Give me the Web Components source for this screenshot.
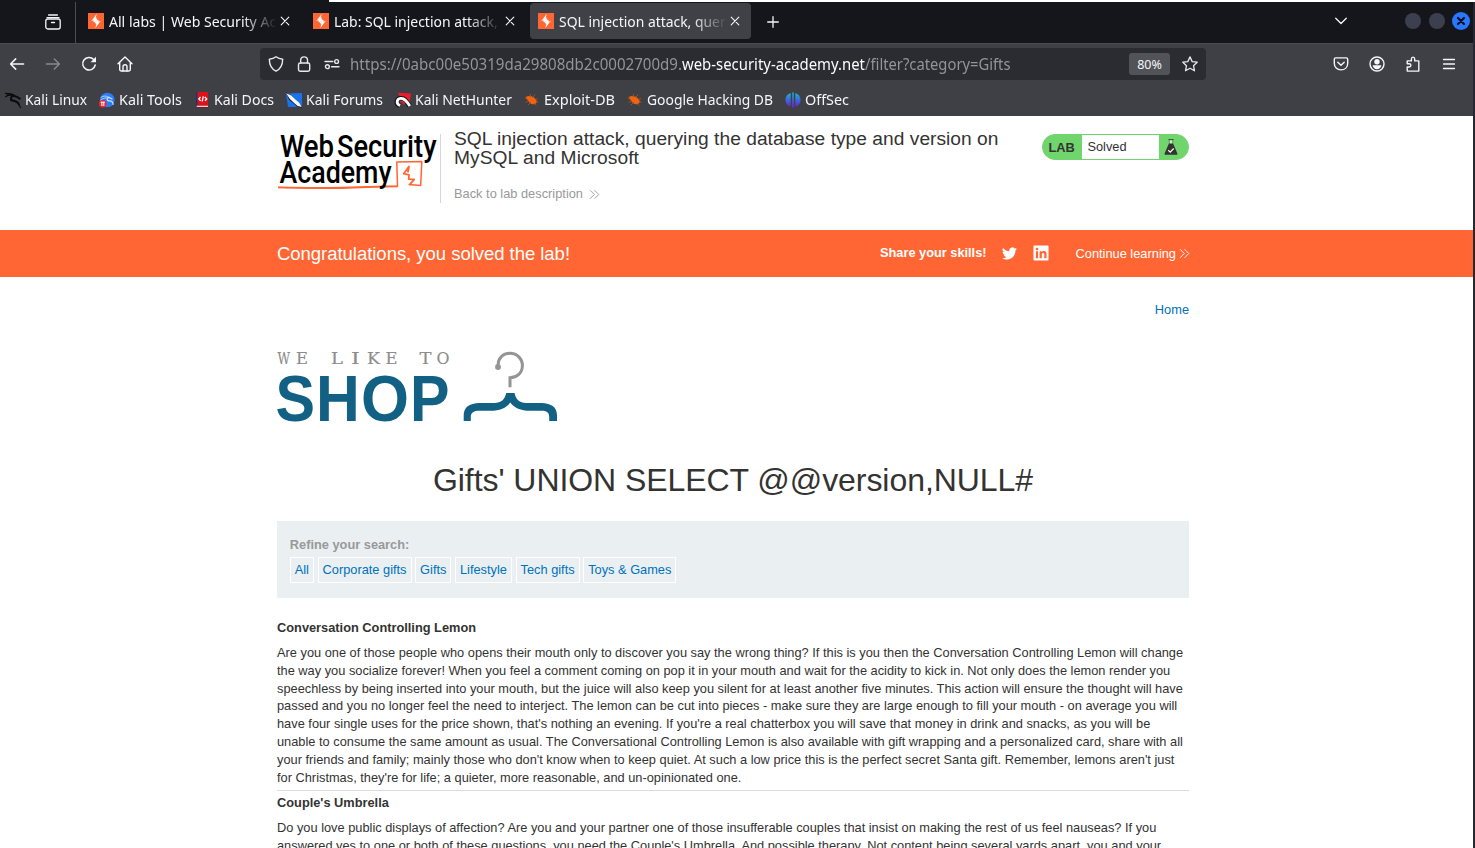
<!DOCTYPE html>
<html lang="en">
<head>
<meta charset="utf-8">
<title>SQL injection attack, querying the database type and version on MySQL and Microsoft</title>
<style>
html,body{margin:0;height:100%;overflow:hidden;background:#fff}
body{font-family:"Liberation Sans",Arial,sans-serif}
</style>
</head>
<body>
<desktop-window></desktop-window>
<script>
const define = (name, html, init) => customElements.define(name, class extends HTMLElement {
  constructor(){ super(); this.attachShadow({mode:'open'}); }
  connectedCallback(){
    this.shadowRoot.innerHTML = typeof html === 'function' ? html(this) : html;
    if (init) init(this);
  }
});

/* One-line text that occupies `w` pixels: by tracking, or with `condense` by glyph width. */
define('fit-text', `<style>:host{display:inline-block;white-space:pre;flex:none}span{display:inline-block;transform-origin:0 50%}</style><span><slot></slot></span>`, el => {
  const s = el.shadowRoot.querySelector('span'), w = +el.getAttribute('w');
  if (!w) return;
  el.style.width = w + 'px';
  const natural = s.getBoundingClientRect().width;
  if (el.hasAttribute('condense')) s.style.transform = `scaleX(${w / natural})`;
  else s.style.letterSpacing = (w - natural) / el.textContent.length + 'px';
});

const L = 'fill="none" stroke="currentColor" stroke-linecap="round" stroke-linejoin="round"';
const icons = {
  stack:[16,`<g ${L} stroke-width="1.3"><path d="M3.6 1h8.8M2 3.6h12"/><rect x=".8" y="5" width="14.4" height="10" rx="2"/><path d="M6.5 8.5h3"/></g>`],
  burp:[16,`<path fill="#ff6633" d="M0 0h16v16H0z"/><path fill="#fff" d="M8.7.8 3.5 8h4.1V5.3zM7.3 15.2 12.5 8H8.5v2.6zM7.6 4.6h1v6.7h-1zM3.5 7l5 1.8L7.5 10zM12.5 9 7.8 7.2l1-1z"/>`],
  x:[10,`<path ${L} stroke-width="1.1" d="m1.2 1.2 7.6 7.6m0-7.6L1.2 8.8"/>`],
  plus:[12,`<path ${L} stroke-width="1.3" d="M6 .7v10.6M.7 6h10.6"/>`],
  chev:[12,`<path ${L} stroke-width="1.3" d="m.7 3.2 5.3 5.3 5.3-5.3"/>`],
  back:[16,`<path ${L} stroke-width="1.5" d="M14.6 8H1.6M6.7 2.9 1.6 8l5.1 5.1"/>`],
  fwd:[16,`<path ${L} stroke-width="1.4" d="M1.4 8h13M9.3 2.9 14.4 8l-5.1 5.1"/>`],
  reload:[16,`<path ${L} stroke-width="1.5" d="M14.2 9A6.3 6.3 0 1 1 12.7 3.5"/><path fill="currentColor" d="M15 .8V6.2H9.6z"/>`],
  home:[16,`<g ${L} stroke-width="1.4"><path d="M1 7.8 8 1l7 6.8M2.7 6.4v7.2c0 .9.5 1.4 1.4 1.4h7.8c.9 0 1.4-.5 1.4-1.4V6.4"/><path d="M6 15v-4.2C6 9.4 6.8 8.7 8 8.7s2 .7 2 2.1V15"/></g>`],
  shield:[16,`<path ${L} stroke-width="1.4" d="M8 .8c2 1.6 4.3 2.3 6.7 2.5-.1 5.3-1.9 9.7-6.7 11.9C3.200 13 1.400 8.600 1.300 3.300 3.700 3.100 6 2.400 8 .8z"/>`],
  lock:[16,`<g ${L} stroke-width="1.4"><rect x="2.500" y="7" width="11.200" height="8.200" rx="1.700"/><path d="M4.700 7V4.300a3.400 3.400 0 0 1 6.800 0V7"/></g>`],
  perms:[16,`<g ${L} stroke-width="1.400"><path d="M1 5.500h7.800M7.500 10.700h7.500"/><circle cx="12.600" cy="5.500" r="1.900"/><circle cx="3.400" cy="10.700" r="1.900"/></g>`],
  star:[16,`<path ${L} stroke-width="1.300" d="m8 .9 2.200 4.700 5 .6-3.700 3.500 1 5.100L8 12.300l-4.500 2.500 1-5.100L.8 6.200l5-.6z"/>`],
  pocket:[16,`<g ${L} stroke-width="1.400"><path d="M1.300 3.300c0-.9.500-1.400 1.400-1.400h10.600c.9 0 1.400.5 1.400 1.400v3.900c0 4-2.800 6.700-6.700 6.700S1.300 11.200 1.300 7.200z"/><path d="M4.800 6.200 8 9.200l3.200-3"/></g>`],
  user:[16,`<circle cx="8" cy="8" r="7" ${L} stroke-width="1.400"/><circle cx="8" cy="5.700" r="2.700" fill="currentColor"/><path fill="currentColor" d="M3.600 9.300h8.800c-.3 2.400-2 3.900-4.400 3.900s-4.100-1.500-4.400-3.900z"/>`],
  ext:[16,`<path ${L} stroke-width="1.400" d="M2.200 15.100V11h2c2.300 0 2.300-3.300 0-3.300h-2V4.900h4.200V2.900c0-2.400 3.300-2.400 3.300 0v2h4.100v10.200z"/>`],
  menu:[14,`<path ${L} stroke-width="1.300" d="M1.500 2.500h11M1.500 7h11M1.500 11.500h11"/>`],
  kali:[16,`<g fill="none" stroke="#0b0b0d" stroke-linecap="round"><path stroke-width="1.200" d="M.4 1.300c4 .2 6.500.3 8.500 1.700M.6 4.800C3 3.200 6 2.900 9 3.700M1.800 3l5-.2"/><path stroke-width="2" d="M8.800 3.500C5.200 4.800 5 7.600 8 8.500c3 .8 5.200 1.400 6 4M9.200 4l2.800.9 2.800 1.800"/><path stroke-width="1.200" d="M12.200 10c1 2 2 3.300 3.300 5.500M7 9l-1.500-.5"/></g>`],
  tools:[16,`<circle cx="8.300" cy="8" r="7.300" fill="#2b7cf6"/><g fill="none" stroke="#cfe3ff" stroke-linecap="round" stroke-width=".8"><path d="M2 5.400c3-2 6.200-1.500 7.800-.2M1.500 8c2.500-2 5.400-2.500 8.700-2.100"/><path stroke-width="1.100" d="M9.300 5.700c-2.200 1-1.300 3.300 1 3.200 2.400-.1 3.700 1.200 3.800 3.600M10 5.200l3 1.800"/></g><circle cx="3.700" cy="11.800" r="3.800" fill="#ed2732"/><path stroke="#fff" d="M1.700 10.200h4.200M2.900 10v4M4.800 10v4"/>`],
  docs:[16,`<path fill="#16367c" d="M2 0h1.700v14.500H2z"/><path fill="#df1118" d="M3.500 0H14v13.700H3.500z"/><path fill="#d7d7df" d="M2.700 13.700H14v1.300H2.700z"/><path fill="#a50b13" d="M2.500 15H14v1H2.500z"/><path fill="none" stroke="#fff" stroke-width="1.300" d="M6.500 5 4.800 7l1.900 1.900M9.300 4.400 8.200 9.300M10.800 5l1.900 1.900-1.700 1.900"/>`],
  forums:[16,`<path fill="#1873ef" d="M0 1.500 16 1v12.500L9 15H2z"/><path fill="#17171c" d="M0 .5 5 3l8 9 3 4-5-1.500-8-7z"/><path fill="#f7f8ff" d="M.2 1.200 5.300 3.500l4.700 4.500 3 2.500 2.700 4.600-4-1.200-3.300-2.600-4.500-4.300z"/>`],
  nethunter:[16,`<path fill="#ed1c2b" d="M3 .8 16 1.500l-1.500 11L8 12z"/><path fill="none" stroke="#15151a" stroke-width="4.800" d="M4.500 13.500C.3 11.500 1.500 7 5.500 6.400s6 2.600 9 7.600"/><path fill="none" stroke="#fff" stroke-width="2.800" d="M5 13.500C.6 11.500 1.800 7 5.600 6.400s6.200 3 9.200 7.600"/><path fill="none" stroke="#dc1c2c" stroke-width="1.800" d="M5 9.700c2-.8 3.500.5 4.500 2.300"/>`],
  exploit:[16,`<path fill="#ee6412" d="M2 4.800C5 3.300 9.500 4.300 12 7.500c1.500 1.900.8 3.900-1.100 4.500-3.200.9-6-1.200-7-3.800L2 6.500z"/><path fill="none" stroke="#ad511c" stroke-width=".9" d="M3.200 5.700.6 6M4.500 9l-3 1.300M6.500 10.500l-2.700 2.700M6 4.800 6.500 2M9 5.500l2-3M11.500 7.500l2.500-1M12 10h2.500M10.300 11.500l2 2.200"/>`],
  offsec:[16,`<defs><linearGradient id="g" x2="0" y2="1"><stop stop-color="#22b0ce"/><stop offset=".5" stop-color="#386bdc"/><stop offset="1" stop-color="#6a25d4"/></linearGradient></defs><g fill="url(#g)"><path d="M5.700 1.200v13.300C3.100 14 .5 11.800.5 7.900S3.100 1.700 5.700 1.200zM10.300 1.200v13.300c2.600-.5 5.200-2.700 5.200-6.600s-2.600-6.200-5.200-6.700z"/><path d="M7.200.5h1.600v15.300H7.200z"/></g>`],
  dbl:[11,`<path fill="none" stroke="currentColor" stroke-width=".9" d="m1 1.200 4.300 4.300L1 9.800M5.500 1.200l4.300 4.300-4.300 4.300"/>`],
  twitter:[24,`<path fill="#fff" d="M24 4.600c-.9.400-1.800.7-2.800.8 1-.6 1.800-1.600 2.200-2.700-1 .6-2 1-3.100 1.200a4.900 4.900 0 0 0-8.400 4.500C7.700 8.200 4.100 6.200 1.600 3.200a4.900 4.900 0 0 0 1.500 6.500c-.8 0-1.600-.2-2.200-.6v.1c0 2.400 1.700 4.400 3.900 4.800-.7.200-1.500.2-2.200.1.600 2 2.400 3.400 4.600 3.400A9.900 9.900 0 0 1 0 19.500 13.900 13.900 0 0 0 7.500 21.700c9.100 0 14-7.500 14-14v-.6c1-.7 1.800-1.600 2.500-2.500z"/>`],
  linkedin:[16,`<rect x=".5" y=".5" width="15" height="15" rx="1" fill="#fff"/><g fill="#f63"><circle cx="4" cy="4" r="1.300"/><path d="M2.900 6.300h2.200v7H2.900zM6.600 6.300h2.100v1c.4-.7 1.200-1.200 2.300-1.200 1.900 0 2.500 1.200 2.500 3.200v4h-2.200V9.800c0-1-.2-1.800-1.200-1.800s-1.300.8-1.300 1.800v3.500H6.600z"/></g>`],
  flask:[16,`<path fill="#c9f0c6" d="M6.200 1.500h3.600v4H6.200z"/><path fill="#333332" d="M5.300.2h5.400v.9H5.300zM5.900 1h.5v4h-.5zM9.600 1h.5v4h-.5zM5.900 4.500h4.200l4.300 10c.2.800-.2 1.300-1 1.300H2.600c-.8 0-1.200-.5-1-1.300z"/><path fill="none" stroke="#fff" stroke-width="1.200" d="m5.200 11.200 2 2 3.500-3.700"/>`]
};
define('ui-icon', el => {
  const [v, body] = icons[el.getAttribute('name')], s = el.getAttribute('size') || v;
  return `<style>:host{display:block;flex:none;width:${s}px;height:${s}px}svg{display:block;overflow:visible}</style><svg width="${s}" height="${s}" viewBox="0 0 ${v} ${v}">${body}</svg>`;
});

define('browser-tab', `<style>
:host{display:flex;box-sizing:border-box;width:221px;height:36px;margin-right:4px;padding:0 8px;align-items:center;border-radius:4px;color:#f5f5fa}
:host([active]){background:#404146}
.label{width:168px;margin:0 3px 0 5px;overflow:hidden;white-space:pre;-webkit-mask-image:linear-gradient(90deg,#000 133px,transparent 168px);mask-image:linear-gradient(90deg,#000 133px,transparent 168px)}
</style><ui-icon name="burp"></ui-icon><div class="label"><slot></slot></div><ui-icon name="x"></ui-icon>`);

define('tab-strip', `<style>
:host{display:flex;height:41px;background:#15161b;color:#f5f5fa;font:14.5px/20px "Noto Sans",sans-serif;padding-top:1px;box-sizing:border-box;border-radius:0 6px 0 0}
.view{width:75px;border-right:1px solid #4b4c51;margin-top:-1px;height:41px;display:flex;align-items:center}
.view ui-icon{margin-left:45px;margin-top:-2px}
.tabs{display:flex;margin-left:4px}
.row{display:flex;height:36px;align-items:center}
.grow{flex:1}
.dot{width:16px;height:16px;border-radius:50%;background:#3c3f4e;margin-right:8px;margin-top:-1px}
.close{display:flex;align-items:center;justify-content:center;width:18px;height:18px;border-radius:50%;background:#2777ff;color:#0b1020;margin:-1px 3px 0 -1px}
.close svg{display:block}
</style>
<div class="view"><ui-icon name="stack"></ui-icon></div>
<div class="tabs"><browser-tab><fit-text condense w="212">All labs | Web Security Academy</fit-text></browser-tab><browser-tab><fit-text condense w="226">Lab: SQL injection attack, querying</fit-text></browser-tab><browser-tab active><fit-text condense w="194.5">SQL injection attack, querying</fit-text></browser-tab></div>
<div class="row" style="margin-left:12px;padding-top:1px"><ui-icon name="plus"></ui-icon></div>
<div class="grow"></div>
<div class="row"><ui-icon name="chev" style="margin-right:58px"></ui-icon><span class="dot"></span><span class="dot"></span><span class="close"><svg width="10" height="10" viewBox="0 0 10 10"><path d="m2 2 6 6m0-6L2 8" stroke="currentColor" stroke-width="2.200" stroke-linecap="round"/></svg></span></div>`);

define('nav-bar', `<style>
:host{display:flex;height:42px;padding-bottom:1px;align-items:center;box-sizing:border-box;border-top:1px solid #4b4c51;background:#3f4045;color:#f5f5fa;font:15.500px/22px "Noto Sans",sans-serif}
.nav{display:flex;gap:20px;padding-left:9px;width:251px}
.url{display:flex;align-items:center;width:946px;height:32px;border-radius:4px;background:#2b2c31;box-sizing:border-box;padding:0 8px;color:#939398;flex:none;margin-top:-1px}
.url>ui-icon{margin-right:12px;color:#e7e7ec}
.url fit-text{padding-top:1px}
.url b{font-weight:400;color:#fbfbfe}
.zoom{margin-left:auto;width:41px;height:22px;border-radius:3px;background:#525358;color:#f5f5fa;font-size:12.500px;line-height:23px;text-align:center;margin-right:12px}
.right{display:flex;gap:20px;margin-left:127px;align-items:center}
.nav,.right{margin-top:-1px}
</style>
<div class="nav"><ui-icon name="back"></ui-icon><ui-icon name="fwd" style="color:#88898e"></ui-icon><ui-icon name="reload"></ui-icon><ui-icon name="home"></ui-icon></div>
<div class="url"><ui-icon name="shield"></ui-icon><ui-icon name="lock"></ui-icon><ui-icon name="perms" style="margin-right:10px"></ui-icon><fit-text condense w="332">https://0abc00e50319da29808db2c0002700d9.</fit-text><b><fit-text condense w="183">web-security-academy.net</fit-text></b><fit-text condense w="145.5">/filter?category=Gifts</fit-text><span class="zoom">80%</span><ui-icon name="star" style="margin:0"></ui-icon></div>
<div class="right"><ui-icon name="pocket"></ui-icon><ui-icon name="user"></ui-icon><ui-icon name="ext"></ui-icon><ui-icon name="menu" style="margin-left:1px"></ui-icon></div>`);

define('bookmark-item', el => `<style>:host{display:flex;align-items:center;gap:4px;flex:none}fit-text{margin-top:-2px}</style><ui-icon name="${el.getAttribute('icon')}"></ui-icon><fit-text condense w="${el.getAttribute('w')}">${el.getAttribute('label')}</fit-text>`);

define('bookmark-bar', `<style>:host{display:flex;height:31px;padding:0 5px 1px;gap:12px;align-items:center;box-sizing:border-box;background:#3f4045;color:#f5f5fa;font:14.500px/20px "Noto Sans",sans-serif}</style>
<bookmark-item icon="kali" label="Kali Linux" w="62"></bookmark-item><bookmark-item icon="tools" label="Kali Tools" w="63"></bookmark-item><bookmark-item icon="docs" label="Kali Docs" w="60"></bookmark-item><bookmark-item icon="forums" label="Kali Forums" w="77"></bookmark-item><bookmark-item icon="nethunter" label="Kali NetHunter" w="97"></bookmark-item><bookmark-item icon="exploit" label="Exploit-DB" w="71"></bookmark-item><bookmark-item icon="exploit" label="Google Hacking DB" w="126"></bookmark-item><bookmark-item icon="offsec" label="OffSec" w="44"></bookmark-item>`);

define('academy-logo', `<style>:host{display:block;width:163px;height:70px;flex:none}svg{display:block;overflow:visible}</style>
<svg width="163" height="70" viewBox="277 133 163 70"><g fill="none" stroke="#f63" stroke-width="1.500" stroke-linejoin="round"><path d="M278 187.600c18 .3 38 1 58 .6s40-1.500 62-1.700"/><path d="M278 187.300c22 .2 44 .6 64 .2 20-.5 38-1 55.500-1.500l-.7-24.100 25-.5-1.100 24-12.200-.9"/><path stroke-width="1.800" d="m409.300 166-5.600 7.700 5.300 1.100-.3 4.400 5.500.1-4.600 5.500M409 167l-1.200 5.500"/></g>
<g font-family="Roboto,sans-serif" font-weight="500" font-size="30.500" fill="#000"><text x="280" y="156.600" textLength="54" lengthAdjust="spacingAndGlyphs">Web</text><text x="337" y="156.600" textLength="99.500" lengthAdjust="spacingAndGlyphs">Security</text><text x="279.500" y="183" textLength="112" lengthAdjust="spacingAndGlyphs">Academy</text></g></svg>`);

define('lab-status', `<style>:host{display:flex;width:147px;height:26px;box-sizing:border-box;border:1px solid #70d56c;border-radius:13px;background:#70d56c;color:#333332;font-size:12.800px;line-height:24px;overflow:hidden}
b{width:39px;box-sizing:border-box;padding:1px 0 0 5.500px}span{width:77px;height:24px;box-sizing:border-box;padding-left:5.400px;background:#fff}ui-icon{margin:4px 0 0 4px}</style><b>LAB</b><span>Solved</span><ui-icon name="flask"></ui-icon>`);

define('lab-header', `<style>:host{display:flex;width:912px;height:114px;margin-left:277px;padding-top:17px;box-sizing:border-box;color:#333332}
.main{border-left:1px solid #d6d6d6;height:69px;margin-top:1px;padding-left:13px;width:588px;box-sizing:border-box}
h2{margin:-5px 0 0;font-size:19.200px;line-height:19.200px;font-weight:400;white-space:nowrap}
.back{display:flex;align-items:center;gap:6px;color:#999;font-size:12.800px;line-height:16px;margin-top:19px}
lab-status{margin:1px 0 0 14px}</style>
<academy-logo></academy-logo><div class="main"><h2><fit-text w="544.5">SQL injection attack, querying the database type and version on</fit-text><br><fit-text w="185">MySQL and Microsoft</fit-text></h2><div class="back"><fit-text w="129">Back to lab description</fit-text><ui-icon name="dbl"></ui-icon></div></div><lab-status></lab-status>`);

define('solved-banner', `<style>:host{display:flex;align-items:center;height:47px;box-sizing:border-box;padding:0 284px 0 277px;background:#f63;color:#fff;font-size:12.800px}
.c{font-size:18.500px;flex:1}b{margin:-2px 15px 0 0}</style><span class="c"><fit-text w="293">Congratulations, you solved the lab!</fit-text></span><b><fit-text w="106.5">Share your skills!</fit-text></b><ui-icon name="twitter" size="15"></ui-icon><ui-icon name="linkedin" style="margin:-.5px 27px 0 16px"></ui-icon><fit-text w="100.500">Continue learning</fit-text><ui-icon name="dbl" style="margin-left:2.500px;margin-right:-.5px"></ui-icon>`);

define('shop-logo', el => {
  const top = [['W',277.500,12.500],['E',296,12],['L',331,12],['I',351,8.800],['K',367,13],['E',385.500,12],['T',419.500,12],['O',436.500,13]];
  const shop = [['S',275.500,39.500],['H',316,43.800],['O',361,48],['P',410,39.500]];
  const t = a => a.map(([c,x,w]) => `<text x="${x}" textLength="${w}" lengthAdjust="spacingAndGlyphs">${c}</text>`).join('');
  return `<style>:host{display:block;width:282px;height:74px}svg{display:block;overflow:visible}</style><svg width="282" height="74" viewBox="277 350 282 74">
<g transform="translate(0 364)" font-family="DejaVu Serif,serif" font-size="16.500" fill="#8c8c8c" stroke="#8c8c8c" stroke-width=".15">${t(top)}</g>
<g transform="translate(0 421)" font-family="Liberation Sans,sans-serif" font-weight="700" font-size="64" fill="#126185">${t(shop)}</g>
<path fill="none" stroke="#949494" stroke-width="3" d="M498.300 366c-1-7 4.500-12.700 11.700-12.700 7 0 12.400 5.400 12.400 12.200 0 7.500-5.400 12-12.400 12.200v9.500"/><circle cx="498" cy="367" r="2.900" fill="#949494"/>
<path fill="#126185" d="M506.200 393h8.300c1.200 6.600 5.300 9.800 11.500 10h15c10.800.2 16 4.500 16 12.500v5.500h-7.800v-4c0-4.500-2.500-6.200-8-6.200h-11c-9.500 0-16-3-19.900-8.300-3.800 5.300-10.300 8.300-19.800 8.300h-11c-5.500 0-8.700 1.700-8.700 6.200v4H463.700v-5.500c0-8 5.200-12.300 16-12.500h15c6.200-.2 10.300-3.400 11.500-10z"/></svg>`;
});

define('filter-link', `<style>:host{box-sizing:border-box;height:26px;border:1px solid #fff;display:block;padding:0 4px;line-height:23px;color:#0071bc;white-space:nowrap;text-align:center;text-indent:-.3px}</style><slot></slot>`);
define('search-filters', `<style>:host{display:block;box-sizing:border-box;height:77px;background:#eaeff2;padding:16px 13px 0;font-size:12.800px}
b{display:block;line-height:16px;color:#999;margin-bottom:4px;text-indent:-.2px}div{display:grid;grid-template-columns:24px 94px 36px 57px 64px 93px;column-gap:3.700px}</style>
<b>Refine your search:</b><div><filter-link>All</filter-link><filter-link>Corporate gifts</filter-link><filter-link>Gifts</filter-link><filter-link>Lifestyle</filter-link><filter-link>Tech gifts</filter-link><filter-link>Toys &amp; Games</filter-link></div>`);

define('product-entry', `<style>:host{display:block;font-size:12.800px;line-height:17.920px;color:#333332;border-bottom:1px solid #dcdcdc;padding-bottom:3px}
b{display:block;padding:3px 0 6.760px}::slotted(p){margin:0;white-space:pre;letter-spacing:.0035px}</style><b><slot name="title"></slot></b><slot></slot>`);

define('shop-page', `<style>:host{display:block;width:912px;margin-left:277px}
.home{text-align:right;color:#0071bc;font-size:12.800px;line-height:16px;padding-top:25px;height:32px}
h1{margin:38px 0 0;font-weight:400;font-size:32px;line-height:36px;color:#333332;text-align:center}
search-filters{margin:23px 0 18px}
.first{height:175px;box-sizing:border-box}</style>
<div class="home">Home</div><shop-logo style="margin-top:16px"></shop-logo>
<h1><fit-text w="600">Gifts' UNION SELECT @@version,NULL#</fit-text></h1>
<search-filters></search-filters>
<product-entry class="first"><span slot="title">Conversation Controlling Lemon</span><p>Are you one of those people who opens their mouth only to discover you say the wrong thing? If this is you then the Conversation Controlling Lemon will change
the way you socialize forever! When you feel a comment coming on pop it in your mouth and wait for the acidity to kick in. Not only does the lemon render you
speechless by being inserted into your mouth, but the juice will also keep you silent for at least another five minutes. This action will ensure the thought will have
passed and you no longer feel the need to interject. The lemon can be cut into pieces - make sure they are large enough to fill your mouth - on average you will
have four single uses for the price shown, that's nothing an evening. If you're a real chatterbox you will save that money in drink and snacks, as you will be
unable to consume the same amount as usual. The Conversational Controlling Lemon is also available with gift wrapping and a personalized card, share with all
your friends and family; mainly those who don't know when to keep quiet. At such a low price this is the perfect secret Santa gift. Remember, lemons aren't just
for Christmas, they're for life; a quieter, more reasonable, and un-opinionated one.</p></product-entry>
<product-entry><span slot="title">Couple's Umbrella</span><p>Do you love public displays of affection? Are you and your partner one of those insufferable couples that insist on making the rest of us feel nauseas? If you
answered yes to one or both of these questions, you need the Couple's Umbrella. And possible therapy. Not content being several yards apart, you and your</p></product-entry>`);

define('desktop-window', `<style>:host{display:flex;flex-direction:column;box-sizing:border-box;width:1475px;height:848px;overflow:hidden;background:#262730}
.edge{height:2px;flex:none;background:linear-gradient(90deg,#15161b 329px,#fff 329px)}
.win{width:1473px;height:846px;background:#fff;overflow:hidden}
tab-strip{box-shadow:6px -6px 0 #101116}</style>
<div class="edge"></div><div class="win"><tab-strip></tab-strip><nav-bar></nav-bar><bookmark-bar></bookmark-bar><lab-header></lab-header><solved-banner></solved-banner><shop-page></shop-page></div>`);
</script>
</body>
</html>
